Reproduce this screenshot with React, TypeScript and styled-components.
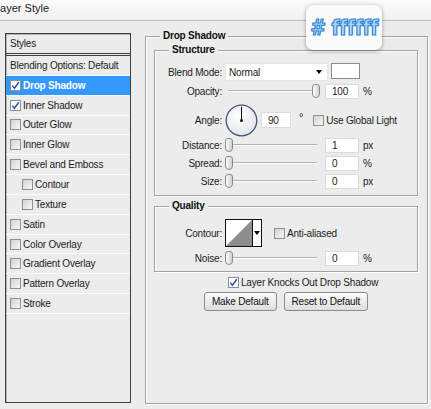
import styled, { createGlobalStyle } from 'styled-components';

const GlobalStyle = createGlobalStyle`
  html, body {
    margin: 0;
    padding: 0;
    background: #ececec;
  }
  body {
    font-family: "Liberation Sans", Arial, sans-serif;
    font-size: 10px;
    letter-spacing: -0.2px;
    color: #1c1c1c;
  }
`;

const styleItems = [
  { name: 'Drop Shadow', checked: true, active: true },
  { name: 'Inner Shadow', checked: true },
  { name: 'Outer Glow' },
  { name: 'Inner Glow' },
  { name: 'Bevel and Emboss' },
  { name: 'Contour', sub: true },
  { name: 'Texture', sub: true },
  { name: 'Satin' },
  { name: 'Color Overlay' },
  { name: 'Gradient Overlay' },
  { name: 'Pattern Overlay' },
  { name: 'Stroke' },
];

const CheckBox = ({ checked }: { checked?: boolean }) => (
  <Box $checked={checked}>
    {checked && (
      <svg width="9" height="9" viewBox="0 0 9 9">
        <path d="M1.3 4.6 L3.4 7.2 L7.8 1.3" fill="none" stroke="#2c4fc4" strokeWidth="1.5" />
      </svg>
    )}
  </Box>
);

const Slider = ({ pos }: { pos: number }) => (
  <SliderTrack>
    <Thumb style={{ marginLeft: pos }} />
  </SliderTrack>
);

export default function App() {
  return (
    <Window>
      <GlobalStyle />
      <TitleBar>
        <Title>Layer Style</Title>
      </TitleBar>

      <Body>
        <StylesPanel>
          <PanelHeader>Styles</PanelHeader>
          <StyleRow>Blending Options: Default</StyleRow>
          {styleItems.map((item) => (
            <StyleRow key={item.name} $active={item.active} $sub={item.sub}>
              <CheckBox checked={item.checked} />
              <span>{item.name}</span>
            </StyleRow>
          ))}
        </StylesPanel>

        <Group $outer>
          <Legend $offset={6}>Drop Shadow</Legend>

          <Group $top={7} $bottom={6}>
            <Legend $offset={14}>Structure</Legend>

            <Row $h={18}>
              <Label>Blend Mode:</Label>
              <Select>
                <span>Normal</span>
                <Arrow />
              </Select>
              <Swatch />
            </Row>

            <Row $h={16} $mt={2}>
              <Label>Opacity:</Label>
              <Slider pos={87} />
              <Field>100</Field>
              <Unit>%</Unit>
            </Row>

            <Row $h={34} $mt={4}>
              <Label>Angle:</Label>
              <svg width="33" height="33" viewBox="0 0 33 33">
                <defs>
                  <radialGradient id="dialFill" cx="40%" cy="35%" r="70%">
                    <stop offset="0" stopColor="#ffffff" />
                    <stop offset="1" stopColor="#e2e4ea" />
                  </radialGradient>
                </defs>
                <circle cx="16.5" cy="16.5" r="15.3" fill="url(#dialFill)" stroke="#44527c" strokeWidth="1.3" />
                <line x1="16.5" y1="16.5" x2="16.5" y2="2.8" stroke="#111" strokeWidth="1" />
                <circle cx="16.5" cy="16.5" r="1.5" fill="#111" />
              </svg>
              <Field $w={30} $h={16} $ml={3}>90</Field>
              <Degree>°</Degree>
              <CheckBox />
              <CheckLabel>Use Global Light</CheckLabel>
            </Row>

            <Row $h={15} $mt={1}>
              <Label>Distance:</Label>
              <Slider pos={0} />
              <Field>1</Field>
              <Unit>px</Unit>
            </Row>

            <Row $h={15} $mt={3}>
              <Label>Spread:</Label>
              <Slider pos={0} />
              <Field>0</Field>
              <Unit>%</Unit>
            </Row>

            <Row $h={15} $mt={3}>
              <Label>Size:</Label>
              <Slider pos={0} />
              <Field>0</Field>
              <Unit>px</Unit>
            </Row>
          </Group>

          <Group $top={7} $bottom={5} $mt={4}>
            <Legend $offset={14}>Quality</Legend>

            <Row $h={28}>
              <Label>Contour:</Label>
              <ContourPicker>
                <svg width="26" height="26" viewBox="0 0 26 26">
                  <rect width="26" height="26" fill="#fff" />
                  <polygon points="0,26 26,0 26,26" fill="#8e8e8e" />
                </svg>
                <ContourDrop>
                  <Arrow />
                </ContourDrop>
              </ContourPicker>
              <Spacer $w={12} />
              <CheckBox />
              <CheckLabel>Anti-aliased</CheckLabel>
            </Row>

            <Row $h={15} $mt={4}>
              <Label>Noise:</Label>
              <Slider pos={0} />
              <Field>0</Field>
              <Unit>%</Unit>
            </Row>
          </Group>

          <KnockRow>
            <CheckBox checked />
            <CheckLabel>Layer Knocks Out Drop Shadow</CheckLabel>
          </KnockRow>

          <ButtonRow>
            <Button>Make Default</Button>
            <Button>Reset to Default</Button>
          </ButtonRow>
        </Group>
      </Body>

      <Badge>
        <BadgeText># ffffff</BadgeText>
      </Badge>
    </Window>
  );
}

const Window = styled.div`
  position: relative;
  width: 431px;
  height: 409px;
  overflow: hidden;
  background: #ececec;
`;

const TitleBar = styled.div`
  height: 20px;
  display: flex;
  align-items: flex-start;
  padding-top: 2px;
  box-sizing: border-box;
  background: linear-gradient(#fbfbfb, #f0f0f0);
  border-bottom: 1px solid #bdbdbd;
  box-sizing: content-box;
  height: 18px;
`;

const Title = styled.div`
  font-size: 11px;
  line-height: 13px;
  letter-spacing: 0;
  margin-left: -6px;
  color: #222;
`;

const Body = styled.div`
  display: flex;
  align-items: flex-start;
  padding-left: 5px;
`;

const StylesPanel = styled.div`
  margin-top: 12px;
  width: 126px;
  height: 370px;
  box-sizing: border-box;
  border: 1px solid #3e3e3e;
  box-shadow: inset 1px 1px 0 #b4b4b4;
  display: flex;
  flex-direction: column;
`;

const PanelHeader = styled.div`
  height: 19px;
  flex: none;
  display: flex;
  align-items: center;
  padding-left: 4px;
  border-bottom: 3px double #3e3e3e;
`;

const StyleRow = styled.div<{ $active?: boolean; $sub?: boolean }>`
  height: 19.85px;
  flex: none;
  box-sizing: border-box;
  display: flex;
  align-items: center;
  gap: 2px;
  padding-left: ${(p) => (p.$sub ? 16 : 4)}px;
  border-bottom: 1px solid #fbfbfb;
  background: ${(p) => (p.$active ? '#3399ff' : 'transparent')};
  color: ${(p) => (p.$active ? '#fff' : '#1c1c1c')};
  font-weight: ${(p) => (p.$active ? 'bold' : 'normal')};
`;

const Box = styled.span<{ $checked?: boolean }>`
  flex: none;
  width: 11px;
  height: 11px;
  box-sizing: border-box;
  border: 1px solid #8f8f8f;
  display: inline-flex;
  align-items: center;
  justify-content: center;
  background: ${(p) => (p.$checked ? '#fff' : 'linear-gradient(135deg, #d2d2d2, #f7f7f7)')};
`;

const Group = styled.fieldset<{ $outer?: boolean; $top?: number; $bottom?: number; $mt?: number }>`
  margin: ${(p) => (p.$outer ? '9px 0 0 14px' : `${p.$mt ?? 0}px 0 0 0`)};
  padding: ${(p) => (p.$outer ? '2px 9px 0 8px' : `${p.$top ?? 0}px 0 ${p.$bottom ?? 0}px 0`)};
  width: ${(p) => (p.$outer ? '283px' : '264px')};
  height: ${(p) => (p.$outer ? '374px' : 'auto')};
  box-sizing: border-box;
  min-width: 0;
  border: 1px solid #a2a2a2;
  box-shadow: 1px 1px 0 #fff, inset 1px 1px 0 #fff;
`;

const Legend = styled.legend<{ $offset: number }>`
  margin-left: ${(p) => p.$offset}px;
  padding: 0 3px;
  font-weight: bold;
  line-height: 12px;
  color: #111;
  background: #ececec;
`;

const Row = styled.div<{ $h: number; $mt?: number }>`
  display: flex;
  align-items: center;
  height: ${(p) => p.$h}px;
  margin-top: ${(p) => p.$mt ?? 0}px;
`;

const Label = styled.span`
  width: 67px;
  margin-right: 3px;
  text-align: right;
  flex: none;
`;

const Select = styled.div`
  width: 103px;
  height: 18px;
  box-sizing: border-box;
  display: flex;
  align-items: center;
  justify-content: space-between;
  padding: 0 5px 0 3px;
  background: #fff;
  border: 1px solid #e6e6e6;
`;

const Arrow = styled.span`
  width: 0;
  height: 0;
  border-left: 3px solid transparent;
  border-right: 3px solid transparent;
  border-top: 4px solid #000;
`;

const Swatch = styled.div`
  align-self: flex-start;
  margin-left: 3px;
  width: 29px;
  height: 16px;
  box-sizing: border-box;
  background: #fff;
  border: 1px solid #8c8c8c;
`;

const SliderTrack = styled.div`
  width: 96px;
  height: 15px;
  flex: none;
  display: flex;
  align-items: flex-start;
  background:
    linear-gradient(#b2b2b2, #b2b2b2) no-repeat 3px 6px / 89px 1px,
    linear-gradient(#fff, #fff) no-repeat 3px 7px / 89px 1px;
`;

const Thumb = styled.div`
  width: 8px;
  height: 14px;
  box-sizing: border-box;
  border: 1px solid #8a8a8a;
  border-radius: 3px 3px 4px 4px;
  background: linear-gradient(90deg, #fdfdfd, #d0d0d0);
`;

const Field = styled.div<{ $w?: number; $h?: number; $ml?: number }>`
  width: ${(p) => p.$w ?? 34}px;
  height: ${(p) => p.$h ?? 15}px;
  margin-left: ${(p) => p.$ml ?? 4}px;
  box-sizing: border-box;
  flex: none;
  display: flex;
  align-items: center;
  padding-left: 6px;
  background: #fff;
  border: 1px solid #dcdcdc;
`;

const Unit = styled.span`
  margin-left: 4px;
`;

const Degree = styled.span`
  margin: -6px 10px 0 8px;
  font-size: 11px;
`;

const CheckLabel = styled.span`
  margin-left: 2px;
  white-space: nowrap;
`;

const ContourPicker = styled.div`
  display: flex;
  height: 28px;
  box-sizing: border-box;
  border: 1px solid #111;
`;

const ContourDrop = styled.div`
  width: 8px;
  display: flex;
  align-items: center;
  justify-content: center;
  background: #fff;
  border-left: 1px solid #111;
`;

const Spacer = styled.span<{ $w: number }>`
  width: ${(p) => p.$w}px;
  flex: none;
`;

const KnockRow = styled.div`
  display: flex;
  align-items: center;
  height: 12px;
  margin: 4px 0 0 74px;
`;

const ButtonRow = styled.div`
  display: flex;
  justify-content: center;
  gap: 7px;
  margin-top: 4px;
`;

const Button = styled.button`
  height: 19px;
  padding: 0 7px;
  font-family: inherit;
  font-size: 10px;
  letter-spacing: -0.2px;
  color: #111;
  border: 1px solid #8a8a8a;
  border-radius: 3px;
  background: linear-gradient(#fbfbfb, #dedede);
  box-shadow: inset 0 1px 0 #fff;
`;

const Badge = styled.div`
  position: absolute;
  top: 5px;
  left: 306px;
  width: 76px;
  height: 45px;
  display: flex;
  align-items: center;
  justify-content: center;
  background: #fbfbfb;
  border-radius: 7px;
  box-shadow: 0 1px 4px rgba(0, 0, 0, 0.35);
`;

const BadgeText = styled.span`
  font-family: "DejaVu Sans Condensed", "DejaVu Sans", sans-serif;
  font-weight: bold;
  font-size: 21px;
  letter-spacing: -0.5px;
  color: #a9d6f8;
  -webkit-text-stroke: 1.1px #2f82d4;
  white-space: nowrap;
`;
